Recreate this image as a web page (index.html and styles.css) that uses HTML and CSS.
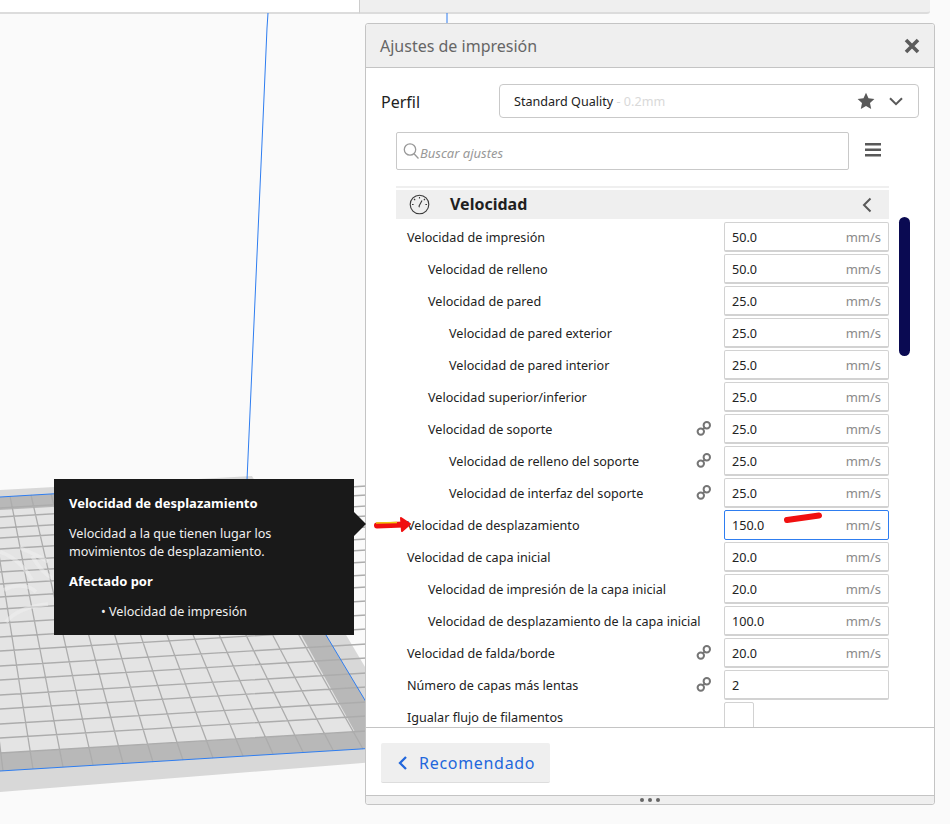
FILE: index.html
```html
<!DOCTYPE html>
<html lang="es">
<head>
<meta charset="utf-8">
<title>Ajustes de impresión</title>
<link rel="stylesheet" href="styles.css">
</head>
<body>
<div class="stage">
  <div class="topbar"><div class="topbar-left"></div><div class="topbar-right"></div></div>

  <svg class="scene" width="950" height="824" viewBox="0 0 950 824">
    <polygon class="plate-outer" points="0,490 252,476 400,726 400,760 0,792"/>
    <polygon class="plate-band" points="0,497 235,483 393,747 0,771"/>
    <polygon class="plate-inner" points="0,510 225,497 355,732 0,753"/>
    <path class="plate-grid" d="M3,771L-30,499M33,769L-10,498M63,767L10,496M93,765L31,495M123,763L51,494M153,762L72,493M183,760L92,492M213,758L113,490M243,756L133,489M273,754L153,488M303,752L174,487M333,750L194,485M363,749L214,484
    M0,508L400,484M0,517L400,493M0,528L400,504M0,538L400,514M0,549L400,525M0,561L400,537M0,572L400,548M0,584L400,560M0,597L400,573M0,609L400,585M0,623L400,599M0,637L400,613M0,651L400,627M0,666L400,642M0,680L400,656M0,695L400,671M0,709L400,685M0,724L400,700M0,738L400,714M0,753L400,729"/>
    <path class="plate-logo" d="M0,552C12,556 24,566 32,580M20,548C30,552 40,556 48,562M4,590C14,584 28,584 36,592M6,622C14,612 30,606 48,604M32,556C38,566 44,574 52,578"/>
    <path class="axis" d="M0,497L235,483L393,747L0,771"/>
    <path class="axis" d="M268,13L267,28L263,120L247,480"/>
    <path class="axis" d="M447,13L447,24"/>
  </svg>

  <section class="panel">
    <header class="panel-head">
      <h1 class="panel-title">Ajustes de impresión</h1>
      <svg class="close-icon" width="16" height="16" viewBox="0 0 16 16"><path d="M2,2L14,14M14,2L2,14"/></svg>
    </header>

    <div class="panel-body">
      <div class="profile-row">
        <span class="profile-label">Perfil</span>
        <div class="combo">
          <span class="combo-text">Standard Quality<span class="combo-sub"> - 0.2mm</span></span>
          <svg class="star-icon" width="18" height="18" viewBox="0 0 18 18"><path d="M9,0.8L11.5,6.3L17.4,7L13,11L14.2,17L9,14L3.8,17L5,11L0.6,7L6.5,6.3Z"/></svg>
          <svg class="chev-icon" width="14" height="9" viewBox="0 0 14 9"><path d="M1,1.2L7,7.2L13,1.2"/></svg>
        </div>
      </div>

      <div class="search-row">
        <div class="search">
          <svg class="search-icon" width="17" height="18" viewBox="0 0 17 18"><circle cx="7" cy="7.5" r="5.7"/><path d="M11,11.8L15.5,16.5"/></svg>
          <span class="search-text">Buscar ajustes</span>
        </div>
        <svg class="menu-icon" width="16" height="14" viewBox="0 0 16 14"><path d="M0,0h16v2.6H0zM0,5.5h16v2.6H0zM0,11h16v2.6H0z"/></svg>
      </div>

      <div class="settings">
        <div class="settings-line"></div>
        <div class="cat-head">
          <svg class="gauge-icon" width="21" height="21" viewBox="0 0 21 21"><circle cx="10.5" cy="10.5" r="9.3"/><path d="M5,5l1.2,1.2M10.5,3v1.6M16,5l-1.2,1.2M3,10.5h1.6M16.4,10.5H18M9.8,12.5L13,6.5M9.8,12.5l1,.5"/></svg>
          <span class="cat-title">Velocidad</span>
          <svg class="cat-chev" width="10" height="16" viewBox="0 0 10 16"><path d="M8.5,1.5L2,8L8.5,14.5"/></svg>
        </div>

        <div class="row"><span class="label l0">Velocidad de impresión</span><div class="field"><span>50.0</span><span class="unit">mm/s</span></div></div>
        <div class="row"><span class="label l1">Velocidad de relleno</span><div class="field"><span>50.0</span><span class="unit">mm/s</span></div></div>
        <div class="row"><span class="label l1">Velocidad de pared</span><div class="field"><span>25.0</span><span class="unit">mm/s</span></div></div>
        <div class="row"><span class="label l2">Velocidad de pared exterior</span><div class="field"><span>25.0</span><span class="unit">mm/s</span></div></div>
        <div class="row"><span class="label l2">Velocidad de pared interior</span><div class="field"><span>25.0</span><span class="unit">mm/s</span></div></div>
        <div class="row"><span class="label l1">Velocidad superior/inferior</span><div class="field"><span>25.0</span><span class="unit">mm/s</span></div></div>
        <div class="row"><span class="label l1">Velocidad de soporte</span><svg class="link-icon" width="16" height="16" viewBox="0 0 16 16"><circle cx="4.8" cy="10.6" r="3.2"/><circle cx="10.8" cy="4.2" r="3.2"/><path d="M6.6,8.6L9,6.2"/></svg><div class="field"><span>25.0</span><span class="unit">mm/s</span></div></div>
        <div class="row"><span class="label l2">Velocidad de relleno del soporte</span><svg class="link-icon" width="16" height="16" viewBox="0 0 16 16"><circle cx="4.8" cy="10.6" r="3.2"/><circle cx="10.8" cy="4.2" r="3.2"/><path d="M6.6,8.6L9,6.2"/></svg><div class="field"><span>25.0</span><span class="unit">mm/s</span></div></div>
        <div class="row"><span class="label l2">Velocidad de interfaz del soporte</span><svg class="link-icon" width="16" height="16" viewBox="0 0 16 16"><circle cx="4.8" cy="10.6" r="3.2"/><circle cx="10.8" cy="4.2" r="3.2"/><path d="M6.6,8.6L9,6.2"/></svg><div class="field"><span>25.0</span><span class="unit">mm/s</span></div></div>
        <div class="row"><span class="label l0">Velocidad de desplazamiento</span><div class="field focus"><span>150.0</span><span class="unit">mm/s</span></div></div>
        <div class="row"><span class="label l0">Velocidad de capa inicial</span><div class="field"><span>20.0</span><span class="unit">mm/s</span></div></div>
        <div class="row"><span class="label l1">Velocidad de impresión de la capa inicial</span><div class="field"><span>20.0</span><span class="unit">mm/s</span></div></div>
        <div class="row"><span class="label l1">Velocidad de desplazamiento de la capa inicial</span><div class="field"><span>100.0</span><span class="unit">mm/s</span></div></div>
        <div class="row"><span class="label l0">Velocidad de falda/borde</span><svg class="link-icon" width="16" height="16" viewBox="0 0 16 16"><circle cx="4.8" cy="10.6" r="3.2"/><circle cx="10.8" cy="4.2" r="3.2"/><path d="M6.6,8.6L9,6.2"/></svg><div class="field"><span>20.0</span><span class="unit">mm/s</span></div></div>
        <div class="row"><span class="label l0">Número de capas más lentas</span><svg class="link-icon" width="16" height="16" viewBox="0 0 16 16"><circle cx="4.8" cy="10.6" r="3.2"/><circle cx="10.8" cy="4.2" r="3.2"/><path d="M6.6,8.6L9,6.2"/></svg><div class="field"><span>2</span></div></div>
        <div class="row"><span class="label l0">Igualar flujo de filamentos</span><div class="field-slot"><div class="check"></div></div></div>
      </div>
      <div class="scrollbar"></div>
    </div>

    <footer class="panel-foot">
      <button class="back-btn">
        <svg class="back-chev" width="10" height="16" viewBox="0 0 10 16"><path d="M8,2L2,8L8,14"/></svg>
        <span>Recomendado</span>
      </button>
    </footer>
    <div class="grip"><i></i><i></i><i></i></div>
  </section>

  <aside class="tooltip">
    <h2 class="tip-title">Velocidad de desplazamiento</h2>
    <p class="tip-text">Velocidad a la que tienen lugar los movimientos de desplazamiento.</p>
    <h3 class="tip-title tip-sub">Afectado por</h3>
    <p class="tip-item">• Velocidad de impresión</p>
  </aside>

  <svg class="marks" width="950" height="824" viewBox="0 0 950 824">
    <path class="mark-red" d="M377,525.5L404,524.5"/>
    <path class="mark-head" d="M401,518L410,524L402,531Z"/>
    <path class="mark-yellow" d="M376,523L397,522.5"/>
    <path class="mark-red" d="M787,520L819,515.5"/>
  </svg>
</div>
</body>
</html>
```

FILE: styles.css
```css
* { box-sizing: border-box; }
html, body { margin: 0; padding: 0; }
body { font-family: "Noto Sans", sans-serif; background: #fafafa; color: #222; }
h1, h2, h3, p { margin: 0; font: inherit; }

.stage { position: relative; width: 950px; height: 824px; overflow: hidden; background: #fafafa; }

.topbar { display: flex; height: 14px; }
.topbar-left { width: 360px; background: #fff; border-bottom: 2px solid #dcdcdc; border-right: 1px solid #ccc; }
.topbar-right { width: 570px; background: #efefef; border-bottom: 2px solid #dcdcdc; border-bottom-right-radius: 3px; }

.scene { position: absolute; left: 0; top: 0; }
.plate-outer { fill: #d8d8d8; }
.plate-band { fill: #b8b8b8; }
.plate-inner { fill: #e4e4e4; }
.plate-grid { fill: none; stroke: #acacac; stroke-width: 1.3; }
.plate-logo { fill: none; stroke: #efefef; stroke-width: 4; opacity: 0.5; }
.axis { fill: none; stroke: #2e7df0; stroke-width: 1; }

.panel { position: absolute; left: 365px; top: 23px; width: 570px; height: 782px; display: flex; flex-direction: column; background: #fff; border: 1px solid #c4c4c4; border-radius: 3px; }
.panel-head { flex: none; height: 44px; display: flex; align-items: center; justify-content: space-between; padding: 0 14px 0 14px; background: #efefef; border-bottom: 1px solid #c4c4c4; border-radius: 3px 3px 0 0; }
.panel-title { font-size: 16px; color: #666; }
.close-icon path { fill: none; stroke: #5c5c5c; stroke-width: 3.6; }

.panel-body { position: relative; flex: 1; min-height: 0; overflow: hidden; padding: 16px 15px 0 15px; }

.profile-row { display: flex; align-items: center; height: 34px; }
.profile-label { width: 118px; padding-top: 2px; font-size: 16px; color: #222; }
.combo { flex: 1; height: 34px; display: flex; align-items: center; padding: 0 15px 0 14px; border: 1px solid #c9c9c9; border-radius: 4px; }
.combo-text { flex: 1; font-size: 12.6px; color: #222; }
.combo-sub { color: #d9d9d9; }
.star-icon { margin-right: 14px; }
.star-icon path { fill: #595959; }
.chev-icon path { fill: none; stroke: #595959; stroke-width: 2; }

.search-row { display: flex; align-items: center; height: 38px; margin-top: 14px; padding-left: 15px; }
.search { width: 453px; height: 38px; display: flex; align-items: center; padding-left: 6px; border: 1px solid #c9c9c9; border-radius: 2px; }
.search-icon { margin-right: 0; }
.search-icon circle, .search-icon path { fill: none; stroke: #999; stroke-width: 1.3; }
.search-text { padding-top: 3px; font-size: 13px; font-style: italic; color: #999; }
.menu-icon { margin-left: 16px; margin-top: -2px; }
.menu-icon path { fill: #595959; }

.settings { margin: 16px 0 0 15px; width: 493px; }
.settings-line { height: 2px; background: #efefef; margin-bottom: 2px; }
.cat-head { height: 29px; display: flex; align-items: center; padding: 0 17px 0 13px; background: #efefef; margin-bottom: 3px; }
.gauge-icon circle, .gauge-icon path { fill: none; stroke: #3a3a3a; stroke-width: 1.1; }
.cat-title { flex: 1; margin-left: 20px; padding-bottom: 2px; font-size: 16px; font-weight: 700; color: #1f1f1f; }
.cat-chev path { fill: none; stroke: #595959; stroke-width: 2; }

.row { display: flex; align-items: center; height: 30px; margin-bottom: 2px; }
.label { flex: 1; font-size: 12.6px; color: #222; white-space: nowrap; }
.l0 { padding-left: 11px; }
.l1 { padding-left: 32px; }
.l2 { padding-left: 53px; }
.link-icon { margin-right: 12px; }
.link-icon circle, .link-icon path { fill: none; stroke: #757575; stroke-width: 2; }
.field { width: 165px; height: 30px; flex: none; display: flex; align-items: center; justify-content: space-between; padding: 1px 7px 0 7px; font-size: 12.6px; color: #222; border: 1px solid #d2d2d2; border-bottom-width: 2px; border-radius: 2px; }
.field.focus { border: 1px solid #2e7df0; padding-top: 0; }
.unit { color: #8a8a8a; font-size: 13px; }
.field-slot { width: 165px; flex: none; height: 30px; }
.check { width: 30px; height: 30px; border: 1px solid #d2d2d2; border-radius: 2px; }

.scrollbar { position: absolute; left: 533px; top: 149px; width: 11px; height: 139px; background: #0a0a52; border-radius: 6px; }

.panel-foot { flex: none; height: 68px; padding: 15px 0 0 15px; border-top: 1px solid #c4c4c4; background: #fff; }
.back-btn { display: flex; align-items: center; width: 169px; height: 40px; padding: 0 0 0 17px; font: inherit; font-size: 16px; letter-spacing: 0.7px; color: #2267dc; background: #efefef; border: 0; border-bottom: 1px solid #ddd; border-radius: 2px; }
.back-chev { margin-right: 11px; }
.back-chev path { fill: none; stroke: #2267dc; stroke-width: 2.3; }

.grip { flex: none; height: 9px; display: flex; align-items: center; justify-content: center; gap: 4px; background: #efefef; border-top: 1px solid #c4c4c4; border-radius: 0 0 3px 3px; }
.grip i { width: 4px; height: 4px; border-radius: 50%; background: #666; }

.tooltip { position: absolute; left: 54px; top: 479px; width: 300px; height: 156px; padding: 15px; background: #191919; color: #f0f0f0; font-size: 12.6px; line-height: 18px; }
.tooltip::after { content: ""; position: absolute; left: 300px; top: 33px; border-left: 12px solid #191919; border-top: 12px solid transparent; border-bottom: 12px solid transparent; }
.tip-title { font-size: 13px; font-weight: 700; color: #fff; }
.tip-text { margin-top: 13px; }
.tip-sub { margin-top: 11px; }
.tip-item { margin-top: 13px; padding-left: 32px; }

.marks { position: absolute; left: 0; top: 0; pointer-events: none; }
.mark-red { fill: none; stroke: #f01010; stroke-width: 6; stroke-linecap: round; }
.mark-head { fill: #f01010; stroke: #f01010; stroke-width: 2; stroke-linejoin: round; }
.mark-yellow { fill: none; stroke: #f0c810; stroke-width: 1.5; }
```
